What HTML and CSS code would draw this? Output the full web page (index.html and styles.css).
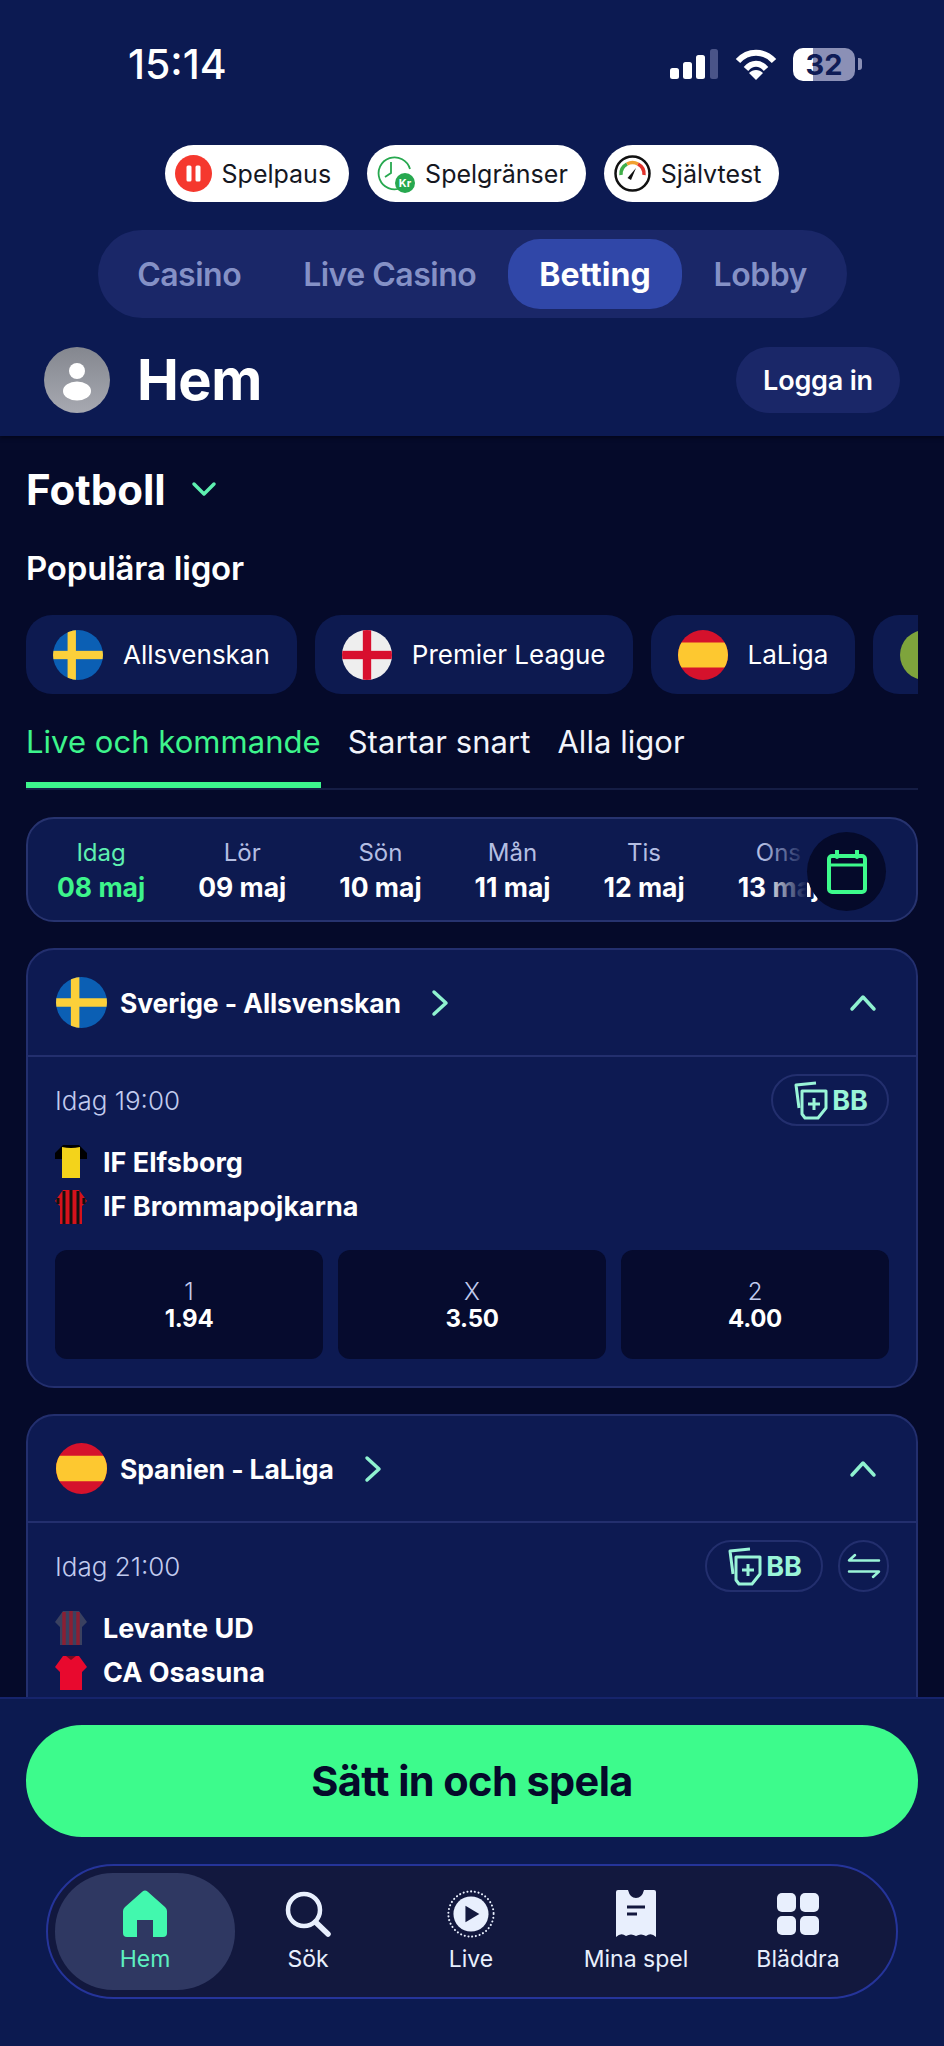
FILE: index.html
```html
<!DOCTYPE html>
<html lang="sv">
<head>
<meta charset="utf-8">
<title>Hem</title>
<link rel="stylesheet" href="styles.css">
</head>
<body>
<div class="app">
  <header class="top">
    <div class="status">
      <span class="clock">15:14</span>
      <div class="status-icons">
        <svg class="signal" width="48" height="30" viewBox="0 0 48 30"><rect x="0" y="19" width="9" height="11" rx="2.5" fill="#fff"/><rect x="13" y="13" width="9" height="17" rx="2.5" fill="#fff"/><rect x="26" y="6" width="9" height="24" rx="2.5" fill="#fff"/><rect x="40" y="0" width="8" height="30" rx="2.5" fill="#4a5488"/></svg>
        <svg class="wifi" width="42" height="31" viewBox="0 0 42 31"><path d="M3 12C13 1 29 1 39 12" fill="none" stroke="#fff" stroke-width="6"/><path d="M11 20C17 13 25 13 31 20" fill="none" stroke="#fff" stroke-width="6"/><path d="M21 31L14 24C18 20 24 20 28 24Z" fill="#fff"/></svg>
        <div class="battery"><span class="battery-text">32</span></div>
        <span class="battery-cap"></span>
      </div>
    </div>
    <div class="pills">
      <div class="pill">
        <svg width="37" height="37" viewBox="0 0 37 37"><circle cx="18.500" cy="18.500" r="18.500" fill="#f5382e"/><rect x="11.500" y="10.500" width="5" height="16" rx="1.500" fill="#fff"/><rect x="20.500" y="10.500" width="5" height="16" rx="1.500" fill="#fff"/></svg>
        <span>Spelpaus</span>
      </div>
      <div class="pill">
        <svg width="38" height="38" viewBox="0 0 38 38"><path d="M24 33A16 16 0 1 1 33 14" fill="none" stroke="#27a84f" stroke-width="1.800"/><path d="M14 7L14 18L8 22" fill="none" stroke="#27a84f" stroke-width="1.800"/><circle cx="28" cy="28" r="10" fill="#27a84f"/><text x="28" y="32" class="kr">Kr</text></svg>
        <span>Spelgränser</span>
      </div>
      <div class="pill">
        <svg width="37" height="37" viewBox="0 0 37 37"><circle cx="18.500" cy="18.500" r="17" fill="#fff" stroke="#111" stroke-width="2.500"/><path d="M7 20A11.500 11.500 0 0 1 13 9" fill="none" stroke="#3fae49" stroke-width="3.500"/><path d="M13 9A11.500 11.500 0 0 1 24 9" fill="none" stroke="#f0a030" stroke-width="3.500"/><path d="M24 9A11.500 11.500 0 0 1 30 20" fill="none" stroke="#e2342c" stroke-width="3.500"/><path d="M13.500 23L22 13L17 25Z" fill="#111"/></svg>
        <span>Självtest</span>
      </div>
    </div>
    <nav class="segment">
      <span class="seg">Casino</span>
      <span class="seg">Live Casino</span>
      <span class="seg seg-on">Betting</span>
      <span class="seg">Lobby</span>
    </nav>
    <div class="headrow">
      <div class="avatar">
        <svg width="66" height="66" viewBox="0 0 66 66"><circle cx="33" cy="24" r="8" fill="#fff"/><ellipse cx="33" cy="44" rx="14" ry="9.500" fill="#fff"/></svg>
      </div>
      <h1 class="title">Hem</h1>
      <button class="login">Logga in</button>
    </div>
  </header>

  <main class="main">
    <div class="sport">
      <span>Fotboll</span>
      <svg width="26" height="16" viewBox="0 0 26 16"><path d="M3 3L13 13L23 3" fill="none" stroke="#5ef0b0" stroke-width="3.500" stroke-linecap="round" stroke-linejoin="round"/></svg>
    </div>
    <h2 class="popular">Populära ligor</h2>
    <div class="chips">
      <div class="chip">
        <div class="flag"><svg viewBox="0 0 48 48"><rect width="48" height="48" fill="#0b5fb4"/><rect x="14" width="8" height="48" fill="#fcd03a"/><rect y="20" width="48" height="8" fill="#fcd03a"/></svg></div>
        <span>Allsvenskan</span>
      </div>
      <div class="chip">
        <div class="flag"><svg viewBox="0 0 48 48"><rect width="48" height="48" fill="#eeeeee"/><rect x="20" width="8" height="48" fill="#d80f2e"/><rect y="20" width="48" height="8" fill="#d80f2e"/></svg></div>
        <span>Premier League</span>
      </div>
      <div class="chip">
        <div class="flag"><svg viewBox="0 0 48 48"><rect width="48" height="48" fill="#d5122c"/><rect y="12" width="48" height="24" fill="#fdc830"/></svg></div>
        <span>LaLiga</span>
      </div>
      <div class="chip chip-more">
        <div class="flag flag-green"></div>
      </div>
    </div>
    <div class="tabs">
      <span class="tab tab-on">Live och kommande</span>
      <span class="tab">Startar snart</span>
      <span class="tab">Alla ligor</span>
    </div>
    <div class="dates">
      <div class="day day-on"><span class="day-name">Idag</span><span class="day-date">08 maj</span></div>
      <div class="day"><span class="day-name">Lör</span><span class="day-date">09 maj</span></div>
      <div class="day"><span class="day-name">Sön</span><span class="day-date">10 maj</span></div>
      <div class="day"><span class="day-name">Mån</span><span class="day-date">11 maj</span></div>
      <div class="day"><span class="day-name">Tis</span><span class="day-date">12 maj</span></div>
      <div class="day"><span class="day-name">Ons</span><span class="day-date">13 maj</span></div>
      <div class="fade"></div>
      <div class="calendar">
        <svg width="40" height="44" viewBox="0 0 40 44"><path d="M10 1V7M30 1V7" stroke="#3dfb8c" stroke-width="4" stroke-linecap="round"/><rect x="2" y="6" width="36" height="36" rx="3" fill="none" stroke="#3dfb8c" stroke-width="4"/><path d="M2 15H38" stroke="#3dfb8c" stroke-width="3"/></svg>
      </div>
    </div>

    <section class="card">
      <div class="card-head">
        <div class="flag flag-lg"><svg viewBox="0 0 48 48"><rect width="48" height="48" fill="#0b5fb4"/><rect x="14" width="8" height="48" fill="#fcd03a"/><rect y="20" width="48" height="8" fill="#fcd03a"/></svg></div>
        <span class="league">Sverige - Allsvenskan</span>
        <svg class="go" width="18" height="28" viewBox="0 0 18 28"><path d="M3 3L15 14L3 25" fill="none" stroke="#8ff2d0" stroke-width="3.500" stroke-linecap="round" stroke-linejoin="round"/></svg>
        <svg class="fold" width="28" height="18" viewBox="0 0 28 18"><path d="M3 15L14 3L25 15" fill="none" stroke="#8ff2d0" stroke-width="3.500" stroke-linecap="round" stroke-linejoin="round"/></svg>
      </div>
      <div class="card-body">
        <div class="meta">
          <span class="when">Idag 19:00</span>
          <div class="bb">
            <svg width="38" height="40" viewBox="0 0 38 40"><path d="M24 3L4 5L7 28" fill="none" stroke="#9af5d8" stroke-width="3" stroke-linejoin="round"/><path d="M10 11H34V28L26 38H13L10 34Z" fill="#0d1a52" stroke="#9af5d8" stroke-width="3" stroke-linejoin="round"/><path d="M22 18V30M16 24H28" stroke="#9af5d8" stroke-width="3"/></svg>
            <span>BB</span>
          </div>
        </div>
        <div class="team">
          <svg class="shirt" width="32" height="36" viewBox="0 0 32 36"><path d="M8 1H24L32 9V15H0V9Z" fill="#000"/><path d="M7 3Q16 5 25 3V34H7Z" fill="#f3d31b"/></svg>
          <span>IF Elfsborg</span>
        </div>
        <div class="team">
          <svg class="shirt" width="32" height="36" viewBox="0 0 32 36"><path d="M8 1H24L32 12L27 17V35H5V17L0 12Z" fill="#d5121c"/><path d="M9 2V35M16 1V35M23 2V35M3 9V15M29 9V15" stroke="#111" stroke-width="3"/></svg>
          <span>IF Brommapojkarna</span>
        </div>
        <div class="odds">
          <div class="odd"><span class="odd-key">1</span><span class="odd-val">1.94</span></div>
          <div class="odd"><span class="odd-key">X</span><span class="odd-val">3.50</span></div>
          <div class="odd"><span class="odd-key">2</span><span class="odd-val">4.00</span></div>
        </div>
      </div>
    </section>

    <section class="card card-next">
      <div class="card-head">
        <div class="flag flag-lg"><svg viewBox="0 0 48 48"><rect width="48" height="48" fill="#d5122c"/><rect y="12" width="48" height="24" fill="#fdc830"/></svg></div>
        <span class="league">Spanien - LaLiga</span>
        <svg class="go" width="18" height="28" viewBox="0 0 18 28"><path d="M3 3L15 14L3 25" fill="none" stroke="#8ff2d0" stroke-width="3.500" stroke-linecap="round" stroke-linejoin="round"/></svg>
        <svg class="fold" width="28" height="18" viewBox="0 0 28 18"><path d="M3 15L14 3L25 15" fill="none" stroke="#8ff2d0" stroke-width="3.500" stroke-linecap="round" stroke-linejoin="round"/></svg>
      </div>
      <div class="card-body">
        <div class="meta">
          <span class="when">Idag 21:00</span>
          <div class="bb">
            <svg width="38" height="40" viewBox="0 0 38 40"><path d="M24 3L4 5L7 28" fill="none" stroke="#9af5d8" stroke-width="3" stroke-linejoin="round"/><path d="M10 11H34V28L26 38H13L10 34Z" fill="#0d1a52" stroke="#9af5d8" stroke-width="3" stroke-linejoin="round"/><path d="M22 18V30M16 24H28" stroke="#9af5d8" stroke-width="3"/></svg>
            <span>BB</span>
          </div>
          <div class="swap">
            <svg width="34" height="26" viewBox="0 0 34 26"><path d="M8 2L2 7.500H32M26 24L32 18.500H2" fill="none" stroke="#9af5d8" stroke-width="2.500" stroke-linecap="round" stroke-linejoin="round"/></svg>
          </div>
        </div>
        <div class="team">
          <svg class="shirt" width="32" height="36" viewBox="0 0 32 36"><path d="M8 1H24L32 12L27 17V35H5V17L0 12Z" fill="#3a4160"/><path d="M9 2V35M16 1V35M23 2V35" stroke="#8a1f33" stroke-width="3.500"/></svg>
          <span>Levante UD</span>
        </div>
        <div class="team">
          <svg class="shirt" width="32" height="36" viewBox="0 0 32 36"><path d="M8 1H24L32 12L27 17V35H5V17L0 12Z" fill="#e8092e"/><path d="M11 1H21L16 5Z" fill="#7a0a20"/></svg>
          <span>CA Osasuna</span>
        </div>
      </div>
    </section>
  </main>

  <footer class="foot">
    <button class="cta">Sätt in och spela</button>
    <nav class="tabbar">
      <div class="nav-item nav-on">
        <svg width="44" height="48" viewBox="0 0 44 48"><path d="M19.500 1.500Q22 -0.500 24.500 1.500L42 17Q44 19 44 21V43Q44 47 40 47H30V30H14V47H4Q0 47 0 43V21Q0 19 2 17Z" fill="#42f8ae"/></svg>
        <span>Hem</span>
      </div>
      <div class="nav-item">
        <svg width="46" height="46" viewBox="0 0 46 46"><circle cx="19" cy="19" r="16" fill="none" stroke="#e8effd" stroke-width="4.500"/><path d="M30.500 31L43 43" stroke="#e8effd" stroke-width="5.500" stroke-linecap="round"/></svg>
        <span>Sök</span>
      </div>
      <div class="nav-item">
        <svg width="52" height="52" viewBox="0 0 52 52"><circle cx="26" cy="26" r="24.500" fill="none" stroke="#e8effd" stroke-width="2.200" stroke-dasharray="0.100 4" stroke-linecap="round"/><circle cx="26" cy="26" r="19" fill="#e8effd"/><path d="M20 17L35 26L20 35Z" fill="#12183e"/></svg>
        <span>Live</span>
      </div>
      <div class="nav-item">
        <svg width="40" height="48" viewBox="0 0 40 48"><path d="M2 0H12Q14 8 20 8Q26 8 28 0H38Q40 0 40 2V47Q35 42 30 46Q25 43 20 46Q15 43 10 46Q5 42 0 47V2Q0 0 2 0Z" fill="#e8effd"/><path d="M11 17H29M11 24H21" stroke="#12183e" stroke-width="3"/></svg>
        <span>Mina spel</span>
      </div>
      <div class="nav-item">
        <svg width="44" height="44" viewBox="0 0 44 44"><rect x="1" y="1" width="19" height="19" rx="5" fill="#e8effd"/><rect x="24" y="1" width="19" height="19" rx="5" fill="#e8effd"/><rect x="1" y="24" width="19" height="19" rx="5" fill="#e8effd"/><rect x="24" y="24" width="19" height="19" rx="5" fill="#e8effd"/></svg>
        <span>Bläddra</span>
      </div>
    </nav>
  </footer>
</div>
</body>
</html>
```
FILE: styles.css
```css
* { box-sizing: border-box; }
html, body { margin: 0; padding: 0; }
body { font-family: Inter, "Liberation Sans", sans-serif; color: #fff; background: #050a2a; }

.app { width: 944px; height: 2046px; display: flex; flex-direction: column; overflow: hidden; }

/* top */
.top { height: 436px; flex: none; background: #0c1a52; box-shadow: 0 2px 4px rgba(0,0,0,.4); position: relative; z-index: 1; }
.status { height: 128px; display: flex; align-items: center; justify-content: space-between; padding: 0 82px 0 128px; }
.clock { font-size: 41px; font-weight: 500; }
.status-icons { display: flex; align-items: center; }
.signal { margin-right: 17px; }
.wifi { margin-right: 16px; }
.battery { width: 62px; height: 33px; border-radius: 10px; background: linear-gradient(90deg, #fff 0 20px, #8b90b6 20px); display: flex; align-items: center; justify-content: center; }
.battery-text { color: #0f1c56; font-size: 29px; font-weight: 700; line-height: 1; }
.battery-cap { width: 4px; height: 12px; margin-left: 3px; border-radius: 0 3px 3px 0; background: #8b90b6; }

.pills { margin-top: 17px; display: flex; justify-content: center; gap: 18px; }
.pill { height: 57px; padding: 0 18px 0 10px; border-radius: 29px; background: #fff; color: #15171f; display: flex; align-items: center; gap: 10px; font-size: 25px; font-weight: 400; }
.kr { font: 700 11px Inter, sans-serif; fill: #fff; text-anchor: middle; }

.segment { margin: 28px auto 0; width: 749px; height: 88px; padding: 9px; border-radius: 44px; background: #1a2768; display: flex; justify-content: center; gap: 2px; }
.seg { padding: 0 30px; border-radius: 32px; display: flex; align-items: center; color: #8591c6; font-size: 32px; font-weight: 600; letter-spacing: -.5px; }
.seg-on { background: #3047a8; color: #fff; font-weight: 700; letter-spacing: 0; padding: 0 31px; }

.headrow { margin-top: 29px; padding: 0 44px; display: flex; align-items: center; }
.avatar { width: 66px; height: 66px; border-radius: 50%; background: linear-gradient(180deg, #84878f, #a7a9b1); }
.title { margin: 0 0 0 27px; font-size: 56px; font-weight: 700; line-height: 66px; letter-spacing: -.5px; }
.login { margin-left: auto; width: 164px; height: 66px; border: 0; border-radius: 33px; background: #1a2768; color: #fff; font: 600 27px Inter, sans-serif; letter-spacing: -.2px; }

/* main */
.main { flex: 1; min-height: 0; overflow: hidden; padding: 28px 26px 0 26px; background: #050a2a; }
.sport { height: 50px; display: flex; align-items: center; gap: 25px; font-size: 42px; font-weight: 700; }
.popular { margin: 34px 0 0; font-size: 33px; line-height: 40px; font-weight: 600; letter-spacing: -.2px; }
.chips { margin-top: 27px; height: 79px; display: flex; gap: 18px; overflow: hidden; }
.chip { flex: none; height: 79px; padding: 0 27px 0 27px; border-radius: 26px; background: #0d1a50; display: flex; align-items: center; gap: 20px; font-size: 26px; }
.chip-more { width: 120px; }
.flag { flex: none; width: 50px; height: 50px; border-radius: 50%; overflow: hidden; }
.flag svg { display: block; width: 100%; height: 100%; }
.flag-green { background: #7ea43c; }
.flag-lg { width: 51px; height: 51px; }

.tabs { margin-top: 24px; display: flex; gap: 27px; border-bottom: 2px solid #151d45; }
.tab { padding-bottom: 16px; line-height: 48px; font-size: 31px; letter-spacing: .04px; border-bottom: 6px solid transparent; color: #f2f4fb; }
.tab-on { color: #3df58c; border-bottom-color: #3df58c; }

.dates { position: relative; margin-top: 27px; height: 105px; padding-left: 29px; border: 2px solid #27336f; border-radius: 28px; background: #0d1a50; display: flex; gap: 53px; align-items: center; overflow: hidden; }
.day { flex: none; display: flex; flex-direction: column; align-items: center; }
.day-name { font-size: 24px; line-height: 34px; color: #b4bee2; }
.day-date { font-size: 26.5px; line-height: 34px; font-weight: 700; white-space: nowrap; }
.day-on .day-name { color: #5ef0b0; }
.day-on .day-date { color: #3df58c; }
.fade { position: absolute; right: 109px; top: 0; bottom: 0; width: 45px; background: linear-gradient(90deg, rgba(13,26,80,0), #0d1a50); }
.calendar { position: absolute; right: 30px; top: 13px; width: 79px; height: 79px; border-radius: 50%; background: #050a2a; display: flex; align-items: center; justify-content: center; }

.card { margin-top: 26px; border: 2px solid #232f6e; border-radius: 28px; background: #0d1a52; }
.card-next { margin-top: 26px; }
.card-head { height: 107px; padding: 0 39px 0 28px; display: flex; align-items: center; border-bottom: 2px solid #232f6e; }
.league { margin-left: 13px; font-size: 26.5px; font-weight: 700; letter-spacing: -.1px; }
.go { margin-left: 30px; }
.fold { margin-left: auto; }
.card-body { padding: 17px 27px 27px 27px; }
.meta { height: 52px; margin-bottom: 14px; display: flex; align-items: center; gap: 15px; }
.when { margin-right: auto; font-size: 26px; font-weight: 300; color: #c2cbee; }
.bb { width: 118px; height: 52px; border: 2px solid #232f6e; border-radius: 26px; display: flex; align-items: center; justify-content: center; gap: 2px; color: #9af5d8; font-size: 27px; font-weight: 700; }
.swap { width: 51px; height: 52px; border: 2px solid #232f6e; border-radius: 26px; display: flex; align-items: center; justify-content: center; }
.team { height: 44.5px; display: flex; align-items: center; gap: 16px; font-size: 27px; font-weight: 700; }
.shirt { flex: none; }
.odds { margin-top: 21px; display: grid; grid-template-columns: repeat(3, 1fr); gap: 15px; }
.odd { height: 109px; border-radius: 12px; background: #060b2e; display: flex; flex-direction: column; align-items: center; justify-content: center; }
.odd-key { font-size: 24px; line-height: 27px; font-weight: 300; color: #c2cbee; }
.odd-val { font-size: 24px; line-height: 27px; font-weight: 700; letter-spacing: -.3px; }

/* footer */
.foot { flex: none; height: 349px; padding: 26px 26px 0 26px; border-top: 2px solid #16246c; background: #0c1a50; position: relative; z-index: 1; }
.cta { display: block; width: 100%; height: 112px; border: 0; border-radius: 56px; background: #3dfb8c; color: #050a2a; font: 700 41.5px Inter, sans-serif; letter-spacing: -.6px; }
.tabbar { margin: 27px 20px 0; height: 135px; padding: 7px 0 0 7px; border: 2px solid #25349a; border-radius: 68px; background: #12183e; display: grid; grid-template-columns: 180px 146px 180px 150px 174px; align-items: start; }
.nav-item { height: 117px; padding-top: 17px; display: flex; flex-direction: column; align-items: center; color: #e8effd; font-size: 23px; }
.nav-item svg { height: 48px; flex: none; }
.nav-item span { margin-top: 6px; line-height: 30px; white-space: nowrap; }
.nav-on { border-radius: 58px; background: #2f3862; color: #5ef0c0; }
```
